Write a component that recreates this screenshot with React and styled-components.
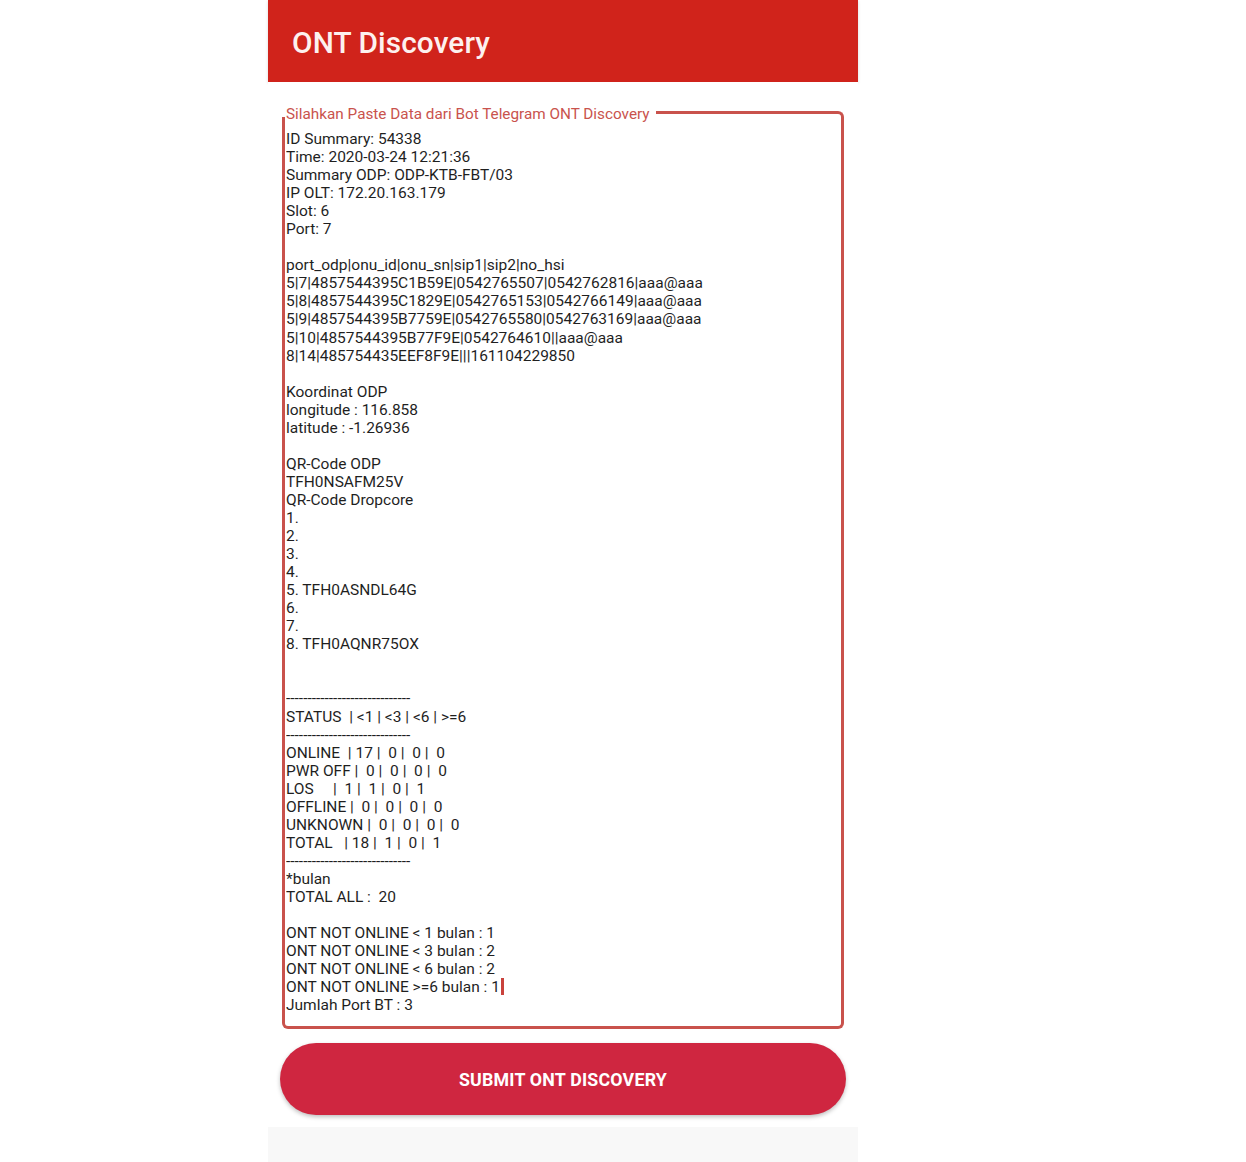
import React from "react";
import styled, { createGlobalStyle } from "styled-components";

const GlobalStyle = createGlobalStyle`
  body {
    margin: 0;
    background: #ffffff;
    font-family: Roboto, "Noto Sans", sans-serif;
  }
`;

const discoveryText = `ID Summary: 54338
Time: 2020-03-24 12:21:36
Summary ODP: ODP-KTB-FBT/03
IP OLT: 172.20.163.179
Slot: 6
Port: 7

port_odp|onu_id|onu_sn|sip1|sip2|no_hsi
5|7|4857544395C1B59E|0542765507|0542762816|aaa@aaa
5|8|4857544395C1829E|0542765153|0542766149|aaa@aaa
5|9|4857544395B7759E|0542765580|0542763169|aaa@aaa
5|10|4857544395B77F9E|0542764610||aaa@aaa
8|14|485754435EEF8F9E|||161104229850

Koordinat ODP
longitude : 116.858
latitude : -1.26936

QR-Code ODP
TFH0NSAFM25V
QR-Code Dropcore
1.
2.
3.
4.
5. TFH0ASNDL64G
6.
7.
8. TFH0AQNR75OX


-----------------------------
STATUS  | <1 | <3 | <6 | >=6
-----------------------------
ONLINE  | 17 |  0 |  0 |  0
PWR OFF |  0 |  0 |  0 |  0
LOS     |  1 |  1 |  0 |  1
OFFLINE |  0 |  0 |  0 |  0
UNKNOWN |  0 |  0 |  0 |  0
TOTAL   | 18 |  1 |  0 |  1
-----------------------------
*bulan
TOTAL ALL :  20

ONT NOT ONLINE < 1 bulan : 1
ONT NOT ONLINE < 3 bulan : 2
ONT NOT ONLINE < 6 bulan : 2
ONT NOT ONLINE >=6 bulan : 1`;

const App = () => {
  return (
    <>
      <GlobalStyle />
      <Screen>
        <Header>
          <Title>ONT Discovery</Title>
        </Header>
        <Content>
          <FieldTop>
            <Legend>Silahkan Paste Data dari Bot Telegram ONT Discovery</Legend>
            <TopLine />
          </FieldTop>
          <FieldBody>
            <DataText>
              {discoveryText}
              <Caret />
              {"\nJumlah Port BT : 3"}
            </DataText>
          </FieldBody>
          <SubmitButton type="button">SUBMIT ONT DISCOVERY</SubmitButton>
        </Content>
      </Screen>
    </>
  );
};

export default App;

const borderColor = "#c9524c";

const Screen = styled.div`
  width: 590px;
  min-height: 1162px;
  margin-left: 268px;
  background: #f8f8f8;
  display: flex;
  flex-direction: column;
`;

const Header = styled.header`
  height: 82px;
  background: #d0231b;
  display: flex;
  align-items: center;
  padding-left: 24px;
  box-sizing: border-box;
  box-shadow: 0 1px 3px rgba(0, 0, 0, 0.15);
`;

const Title = styled.h1`
  margin: 0;
  margin-top: 2px;
  color: #fdf1ef;
  font-family: Roboto, sans-serif;
  font-weight: 500;
  font-size: 29.8px;
  letter-spacing: 0.1px;
`;

const Content = styled.main`
  background: #ffffff;
  padding: 23px 12px 12px 12px;
  display: flex;
  flex-direction: column;
`;

const FieldTop = styled.div`
  display: flex;
  height: 12px;
  margin: 0 2px;
  align-items: flex-start;
`;

const Legend = styled.span`
  font-size: 15.3px;
  line-height: 18px;
  color: #c9534d;
  padding-left: 4px;
  padding-right: 6px;
  white-space: nowrap;
`;

const TopLine = styled.div`
  flex: 1;
  align-self: stretch;
  margin-top: 6px;
  border-top: 3px solid ${borderColor};
  border-right: 3px solid ${borderColor};
  border-top-right-radius: 6px;
`;

const FieldBody = styled.div`
  margin: 0 2px;
  border: 3px solid ${borderColor};
  border-top: none;
  border-bottom-left-radius: 6px;
  border-bottom-right-radius: 6px;
  padding: 13px 4px 12px 1px;
`;

const DataText = styled.div`
  white-space: pre;
  font-size: 15.5px;
  line-height: 18.04px;
  color: #1f1f1f;
  overflow: hidden;
`;

const Caret = styled.span`
  display: inline-block;
  width: 3px;
  height: 17px;
  margin-left: 1px;
  vertical-align: -3px;
  background: #c9423c;
`;

const SubmitButton = styled.button`
  margin-top: 14px;
  height: 72px;
  border: none;
  border-radius: 36px;
  background: #cf2640;
  color: #ffffff;
  font-family: Roboto, sans-serif;
  font-weight: 700;
  font-size: 17.8px;
  letter-spacing: 0.2px;
  box-shadow: 0 2px 4px rgba(0, 0, 0, 0.25);
  cursor: pointer;
`;
